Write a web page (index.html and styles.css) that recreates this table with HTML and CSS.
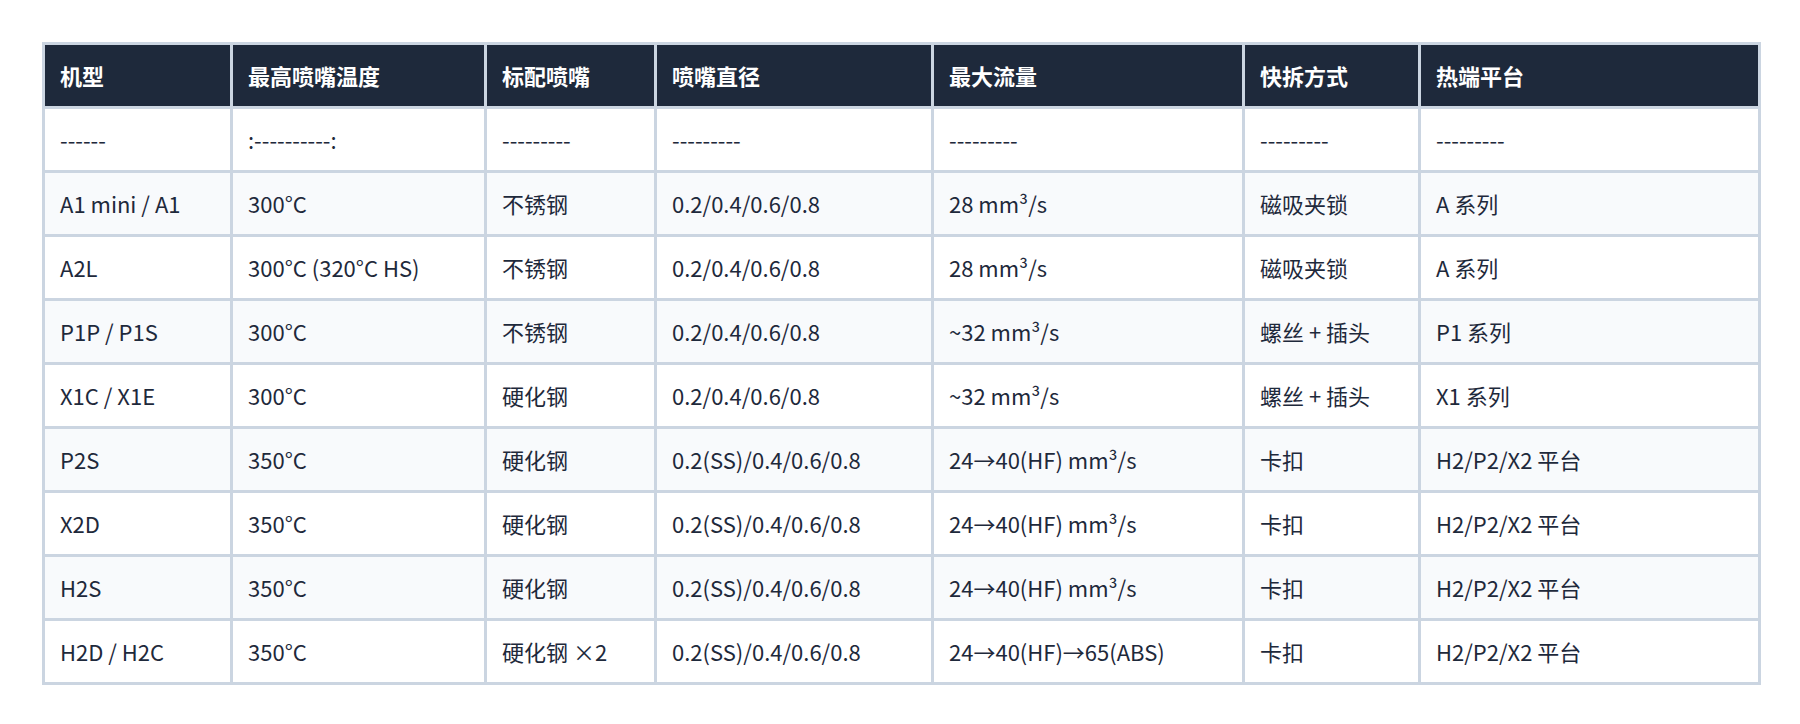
FILE: index.html
```html
<!DOCTYPE html>
<html lang="zh-CN">
<head>
<meta charset="utf-8">
<title>喷嘴对比</title>
<link rel="stylesheet" href="styles.css">
</head>
<body>
<div class="wrap">
<table class="spec">
<colgroup>
<col class="c1"><col class="c2"><col class="c3"><col class="c4"><col class="c5"><col class="c6"><col class="c7">
</colgroup>
<thead>
<tr><th>机型</th><th>最高喷嘴温度</th><th>标配喷嘴</th><th>喷嘴直径</th><th>最大流量</th><th>快拆方式</th><th>热端平台</th></tr>
</thead>
<tbody>
<tr><td>------</td><td>:----------:</td><td>---------</td><td>---------</td><td>---------</td><td>---------</td><td>---------</td></tr>
<tr><td>A1 mini / A1</td><td>300°C</td><td>不锈钢</td><td>0.2/0.4/0.6/0.8</td><td>28 mm³/s</td><td>磁吸夹锁</td><td>A 系列</td></tr>
<tr><td>A2L</td><td>300°C (320°C HS)</td><td>不锈钢</td><td>0.2/0.4/0.6/0.8</td><td>28 mm³/s</td><td>磁吸夹锁</td><td>A 系列</td></tr>
<tr><td>P1P / P1S</td><td>300°C</td><td>不锈钢</td><td>0.2/0.4/0.6/0.8</td><td>~32 mm³/s</td><td>螺丝 + 插头</td><td>P1 系列</td></tr>
<tr><td>X1C / X1E</td><td>300°C</td><td>硬化钢</td><td>0.2/0.4/0.6/0.8</td><td>~32 mm³/s</td><td>螺丝 + 插头</td><td>X1 系列</td></tr>
<tr><td>P2S</td><td>350°C</td><td>硬化钢</td><td>0.2(SS)/0.4/0.6/0.8</td><td>24→40(HF) mm³/s</td><td>卡扣</td><td>H2/P2/X2 平台</td></tr>
<tr><td>X2D</td><td>350°C</td><td>硬化钢</td><td>0.2(SS)/0.4/0.6/0.8</td><td>24→40(HF) mm³/s</td><td>卡扣</td><td>H2/P2/X2 平台</td></tr>
<tr><td>H2S</td><td>350°C</td><td>硬化钢</td><td>0.2(SS)/0.4/0.6/0.8</td><td>24→40(HF) mm³/s</td><td>卡扣</td><td>H2/P2/X2 平台</td></tr>
<tr><td>H2D / H2C</td><td>350°C</td><td>硬化钢 ×2</td><td>0.2(SS)/0.4/0.6/0.8</td><td>24→40(HF)→65(ABS)</td><td>卡扣</td><td>H2/P2/X2 平台</td></tr>
</tbody>
</table>
</div>
</body>
</html>
```

FILE: styles.css
```css
html, body {
  margin: 0;
  padding: 0;
  background: #ffffff;
}
body {
  font-family: "Noto Sans CJK SC", "Noto Sans", sans-serif;
  color: #1e293b;
}
.wrap {
  padding: 42px;
}
.spec {
  width: 100%;
  table-layout: fixed;
  border-collapse: collapse;
  font-size: 22px;
}
.c1 { width: 188px; }
.c2 { width: 254px; }
.c3 { width: 170px; }
.c4 { width: 277px; }
.c5 { width: 311px; }
.c6 { width: 176px; }
.c7 { width: 340px; }
.spec th,
.spec td {
  border: 3px solid #cbd5e1;
  padding: 14px 15px 15px;
  line-height: 32px;
  text-align: left;
  white-space: nowrap;
}
.spec th {
  background: #1e293b;
  color: #ffffff;
  font-weight: 700;
}
.spec tbody tr:nth-child(even) td {
  background: #f8fafc;
}
```
